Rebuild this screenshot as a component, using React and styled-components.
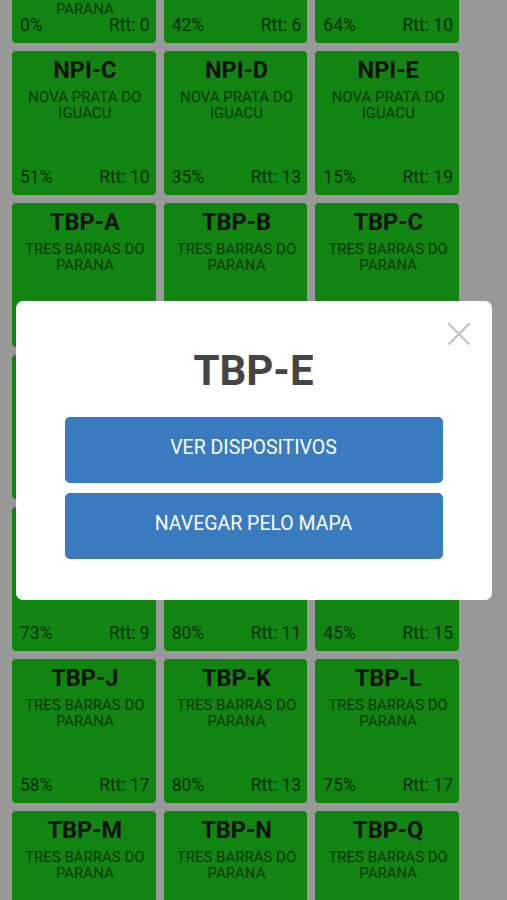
import React from "react";
import styled, { createGlobalStyle } from "styled-components";

const GlobalStyle = createGlobalStyle`
  html, body {
    margin: 0;
    padding: 0;
    background: #ffffff;
    overflow: hidden;
    font-family: Roboto, "Noto Sans", "Liberation Sans", sans-serif;
  }
  #root { height: 900px; overflow: hidden; }
`;

const Page = styled.div`
  height: 900px;
  overflow: hidden;
  background: #ffffff;
`;

const Grid = styled.div`
  display: grid;
  grid-template-columns: repeat(3, 1fr);
  gap: 8px;
  padding: 0 48px 0 12px;
  margin-top: -101px;
`;

const Card = styled.div`
  height: 144px;
  box-sizing: border-box;
  background: #1ddc1d;
  border-radius: 4px;
  display: flex;
  flex-direction: column;
  align-items: stretch;
  padding: 5px 6px 8px 8px;
  overflow: hidden;
`;

const CardTitle = styled.div`
  font-size: 23.5px;
  line-height: 28px;
  font-weight: 700;
  color: #1e1e1e;
  text-align: center;
`;

const CardSubtitle = styled.div`
  margin-top: 5px;
  font-size: 15px;
  line-height: 16px;
  color: rgba(0, 0, 0, 0.62);
  text-align: center;
  flex: 1;
  min-height: 0;
  overflow: hidden;
`;

const CardFooter = styled.div`
  display: flex;
  justify-content: space-between;
  font-size: 17.5px;
  line-height: 20px;
  color: rgba(0, 0, 0, 0.68);
`;

const Overlay = styled.div`
  position: fixed;
  inset: 0;
  background: rgba(0, 0, 0, 0.4);
  display: flex;
  align-items: center;
  justify-content: center;
`;

const Modal = styled.div`
  position: relative;
  width: 476px;
  box-sizing: border-box;
  background: #ffffff;
  border-radius: 7px;
  padding: 45px 49px 41px;
  display: flex;
  flex-direction: column;
  align-items: stretch;
`;

const CloseButton = styled.button`
  position: absolute;
  top: 21px;
  right: 21px;
  width: 24px;
  height: 24px;
  padding: 0;
  border: none;
  background: transparent;
  display: flex;
  align-items: center;
  justify-content: center;
`;

const ModalTitle = styled.h2`
  margin: 0 0 21px;
  font-size: 42px;
  line-height: 50px;
  font-weight: 700;
  color: #454545;
  text-align: center;
`;

const Actions = styled.div`
  display: flex;
  flex-direction: column;
  gap: 10px;
`;

const ActionButton = styled.button`
  height: 66px;
  border: none;
  border-radius: 5px;
  background: #3a7bbf;
  color: #ffffff;
  font-family: Roboto, "Noto Sans", "Liberation Sans", sans-serif;
  font-size: 19.5px;
  font-weight: 400;
  padding: 0 0 4px;
`;

const TBP = "TRES BARRAS DO PARANA";
const NPI = "NOVA PRATA DO IGUACU";

const cards = [
  { name: "SJO-A", sub: "SAO JORGE DO OESTE NOVA ESPERANCA DO SUDOESTE SUL DO PARANA", pct: 0, rtt: 0 },
  { name: "NPI-A", sub: "NOVA PRATA", pct: 42, rtt: 6 },
  { name: "NPI-B", sub: "NOVA PRATA", pct: 64, rtt: 10 },
  { name: "NPI-C", sub: NPI, pct: 51, rtt: 10 },
  { name: "NPI-D", sub: NPI, pct: 35, rtt: 13 },
  { name: "NPI-E", sub: NPI, pct: 15, rtt: 19 },
  { name: "TBP-A", sub: TBP, pct: 62, rtt: 12 },
  { name: "TBP-B", sub: TBP, pct: 40, rtt: 8 },
  { name: "TBP-C", sub: TBP, pct: 55, rtt: 14 },
  { name: "TBP-D", sub: TBP, pct: 70, rtt: 10 },
  { name: "TBP-E", sub: TBP, pct: 33, rtt: 9 },
  { name: "TBP-F", sub: TBP, pct: 48, rtt: 16 },
  { name: "TBP-G", sub: TBP, pct: 73, rtt: 9 },
  { name: "TBP-H", sub: TBP, pct: 80, rtt: 11 },
  { name: "TBP-I", sub: TBP, pct: 45, rtt: 15 },
  { name: "TBP-J", sub: TBP, pct: 58, rtt: 17 },
  { name: "TBP-K", sub: TBP, pct: 80, rtt: 13 },
  { name: "TBP-L", sub: TBP, pct: 75, rtt: 17 },
  { name: "TBP-M", sub: TBP, pct: 66, rtt: 12 },
  { name: "TBP-N", sub: TBP, pct: 52, rtt: 14 },
  { name: "TBP-Q", sub: TBP, pct: 38, rtt: 11 },
];

export default function App() {
  return (
    <Page>
      <GlobalStyle />
      <Grid>
        {cards.map((c) => (
          <Card key={c.name}>
            <CardTitle>{c.name}</CardTitle>
            <CardSubtitle>{c.sub}</CardSubtitle>
            <CardFooter>
              <span>{c.pct}%</span>
              <span>Rtt: {c.rtt}</span>
            </CardFooter>
          </Card>
        ))}
      </Grid>
      <Overlay>
        <Modal>
          <CloseButton aria-label="Fechar">
            <svg width="22" height="22" viewBox="0 0 22 22">
              <path d="M1 1 L21 21 M21 1 L1 21" stroke="#c2c2c2" strokeWidth="2.2" strokeLinecap="round" />
            </svg>
          </CloseButton>
          <ModalTitle>TBP-E</ModalTitle>
          <Actions>
            <ActionButton>VER DISPOSITIVOS</ActionButton>
            <ActionButton>NAVEGAR PELO MAPA</ActionButton>
          </Actions>
        </Modal>
      </Overlay>
    </Page>
  );
}
